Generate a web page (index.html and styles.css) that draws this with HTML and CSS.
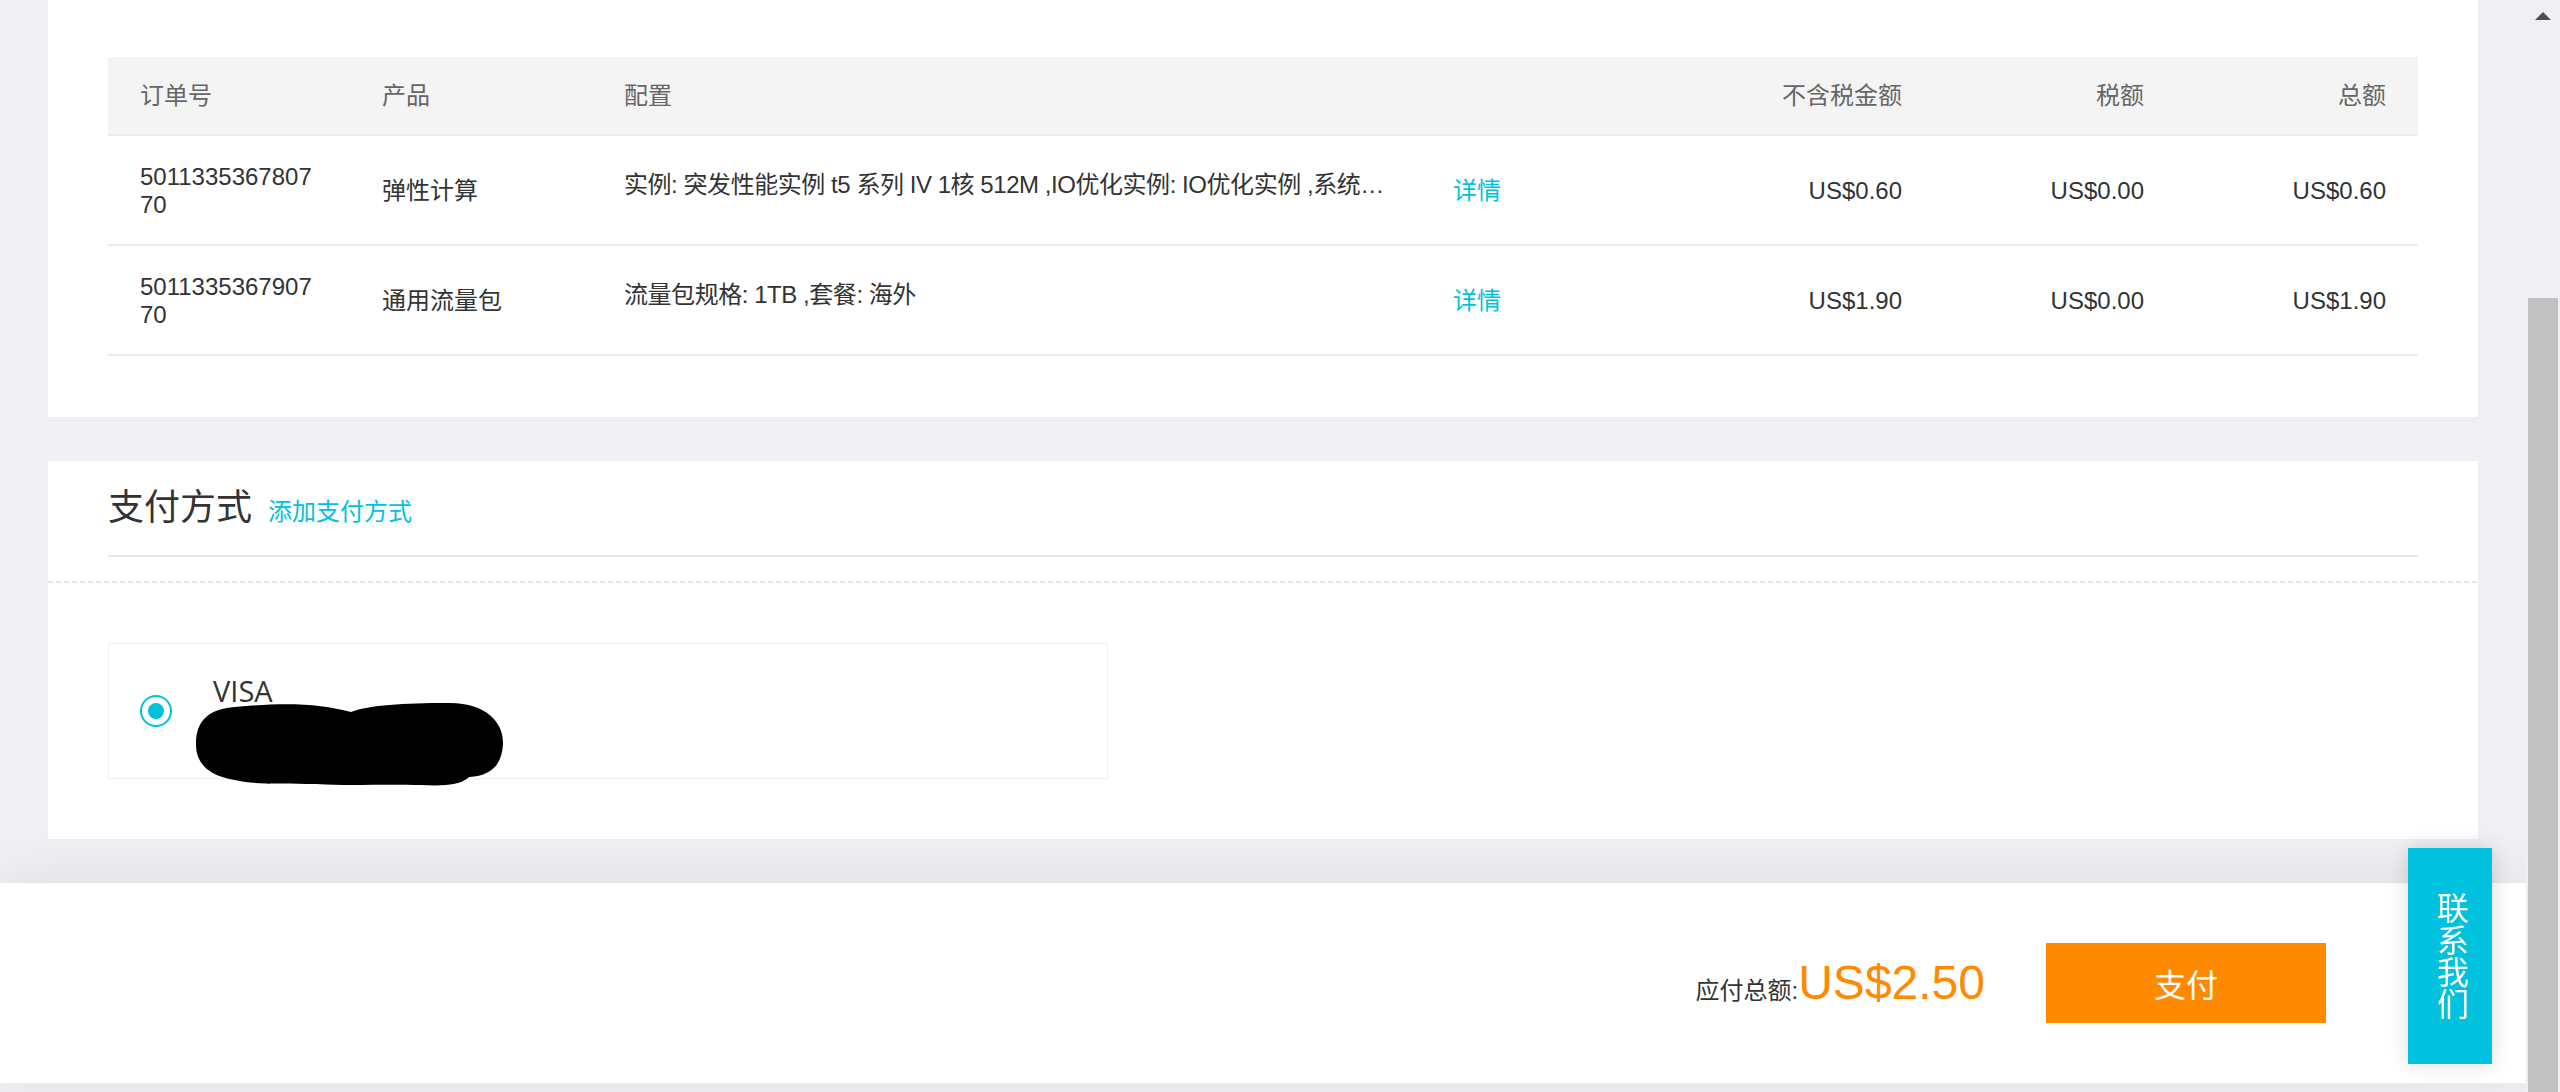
FILE: index.html
```html
<!DOCTYPE html>
<html lang="zh-CN">
<head>
<meta charset="utf-8">
<title>订单支付</title>
<link rel="stylesheet" href="styles.css">
</head>
<body>
<div class="viewport">
  <div class="page">
    <section class="card orders">
      <div class="grid-row head">
        <div class="cell">订单号</div>
        <div class="cell">产品</div>
        <div class="cell">配置</div>
        <div class="cell"></div>
        <div class="cell right">不含税金额</div>
        <div class="cell right">税额</div>
        <div class="cell right">总额</div>
      </div>
      <div class="grid-row body-row">
        <div class="cell num">501133536780770</div>
        <div class="cell">弹性计算</div>
        <div class="cell config">实例: 突发性能实例 t5 系列 IV 1核 512M ,IO优化实例: IO优化实例 ,系统盘: 高效云盘 40GB ,带宽: 1Mbps</div>
        <div class="cell"><a class="link" href="#">详情</a></div>
        <div class="cell right">US$0.60</div>
        <div class="cell right">US$0.00</div>
        <div class="cell right">US$0.60</div>
      </div>
      <div class="grid-row body-row">
        <div class="cell num">501133536790770</div>
        <div class="cell">通用流量包</div>
        <div class="cell config">流量包规格: 1TB ,套餐: 海外</div>
        <div class="cell"><a class="link" href="#">详情</a></div>
        <div class="cell right">US$1.90</div>
        <div class="cell right">US$0.00</div>
        <div class="cell right">US$1.90</div>
      </div>
    </section>

    <section class="card payment">
      <div class="pay-head">
        <h2 class="pay-title">支付方式</h2>
        <a class="add-link" href="#">添加支付方式</a>
      </div>
      <div class="divider"></div>
      <div class="pay-body">
        <div class="method">
          <span class="radio"></span>
          <div class="method-info">
            <span class="brand">VISA</span>
            <svg class="redact" width="308" height="84" viewBox="0 0 302 84" preserveAspectRatio="none">
              <path d="M38 5 C90 0 122 2 152 10 C170 3 204 1 246 1 C286 0 302 22 301 42 C300 64 288 74 268 75 C258 84 240 84 220 83 C180 82 150 84 118 82 C80 81 58 83 38 78 C8 73 0 58 0 42 C0 19 12 7 38 5 Z" fill="#000"/>
            </svg>
          </div>
        </div>
      </div>
    </section>

    <footer class="paybar">
      <div class="total"><span class="total-label">应付总额:</span><span class="total-amount">US$2.50</span></div>
      <button class="pay-btn" type="button">支付</button>
    </footer>
  </div>
  <div class="scrollbar">
    <div class="sb-up"></div>
    <div class="sb-thumb"></div>
  </div>
</div>
<a class="contact" href="#"><span>联系我们</span></a>
</body>
</html>
```

FILE: styles.css
```css
* { box-sizing: border-box; }
html, body { margin: 0; padding: 0; }
body {
  background: #efeff4;
  font-family: "Liberation Sans", "Noto Sans CJK SC", sans-serif;
  color: #333;
  overflow: hidden;
}
.viewport { display: flex; height: 1092px; }
.page { flex: 1; min-width: 0; display: flex; flex-direction: column; }

.card { background: #fff; margin: 0 48px; }

/* orders table */
.orders { padding: 57px 60px 61px; }
.grid-row {
  display: grid;
  grid-template-columns: 242px 242px 829px 271px 242px 242px 242px;
  align-items: center;
  border-bottom: 2px solid #ebebeb;
  font-size: 24px;
  line-height: 28px;
}
.head { height: 79px; background: #f4f4f4; color: #666; }
.body-row { height: 110px; padding-top: 2px; }
.cell { padding: 0 32px; }
.num { word-break: break-all; }
.config {
  padding: 0 14px 12px 32px;
  white-space: nowrap;
  overflow: hidden;
  text-overflow: ellipsis;
  letter-spacing: -0.45px;
}
.right { text-align: right; }
.link { color: #00c1de; text-decoration: none; }

/* payment */
.payment { margin-top: 44px; }
.pay-head {
  margin: 0 60px;
  padding: 22px 0;
  border-bottom: 2px solid #e6e6eb;
  display: flex;
  align-items: baseline;
  gap: 16px;
}
.pay-title { margin: 0; font-size: 36px; line-height: 50px; font-weight: normal; color: #333; }
.add-link { font-size: 24px; color: #00c1de; text-decoration: none; }
.divider {
  margin-top: 24px;
  height: 2px;
  background: repeating-linear-gradient(90deg, #e6e6e6 0 5px, transparent 5px 8px);
}
.pay-body { padding: 60px; }
.method {
  width: 1000px;
  height: 136px;
  border: 1px solid #efefef;
  box-shadow: 0 1px 2px rgba(0, 0, 0, 0.03);
  display: flex;
  padding-left: 31px;
}
.radio {
  align-self: center;
  flex: none;
  width: 32px;
  height: 32px;
  border-radius: 50%;
  border: 2px solid #00c1de;
  display: flex;
  align-items: center;
  justify-content: center;
}
.radio::after {
  content: "";
  width: 16px;
  height: 16px;
  border-radius: 50%;
  background: #00c1de;
}
.method-info { margin: 32px 0 0 41px; display: flex; flex-direction: column; align-items: flex-start; }
.brand { font-family: "Open Sans", "Liberation Sans", sans-serif; font-size: 29px; line-height: 30px; color: #333; }
.redact { display: block; flex: none; margin: -4px 0 0 -17px; }

/* footer bar */
.paybar {
  margin-top: 44px;
  height: 200px;
  flex: none;
  background: #fff;
  box-shadow: 0 -6px 50px rgba(0, 0, 0, 0.07);
  display: flex;
  justify-content: flex-end;
  align-items: center;
  padding-right: 200px;
}
.total { font-size: 48px; line-height: 48px; margin-right: 61px; white-space: nowrap; }
.total-label { font-size: 24px; line-height: 24px; color: #333; }
.total-amount { color: #ff8a00; }
.pay-btn {
  width: 280px;
  height: 80px;
  border: 0;
  background: #ff8a00;
  color: #fff;
  font-family: "Liberation Sans", "Noto Sans CJK SC", sans-serif;
  font-size: 32px;
  display: flex;
  align-items: center;
  justify-content: center;
  padding: 0;
}

/* fake scrollbar */
.scrollbar { width: 34px; flex: none; display: flex; flex-direction: column; background: #efeff4; }
.sb-up { height: 32px; display: flex; align-items: center; justify-content: center; }
.sb-up::before {
  content: "";
  border-left: 8px solid transparent;
  border-right: 8px solid transparent;
  border-bottom: 8px solid #505050;
}
.sb-thumb { margin: 266px 2px 0; flex: 1; background: #c1c1c1; }

/* contact tab */
.contact {
  position: fixed;
  left: 2408px;
  top: 848px;
  width: 84px;
  height: 216px;
  background: #00c1de;
  color: #fff;
  font-size: 32px;
  line-height: 32px;
  text-decoration: none;
  box-shadow: 0 0 20px rgba(0, 0, 0, 0.15);
  display: flex;
  align-items: center;
  justify-content: center;
}
.contact span { writing-mode: vertical-rl; }
```
